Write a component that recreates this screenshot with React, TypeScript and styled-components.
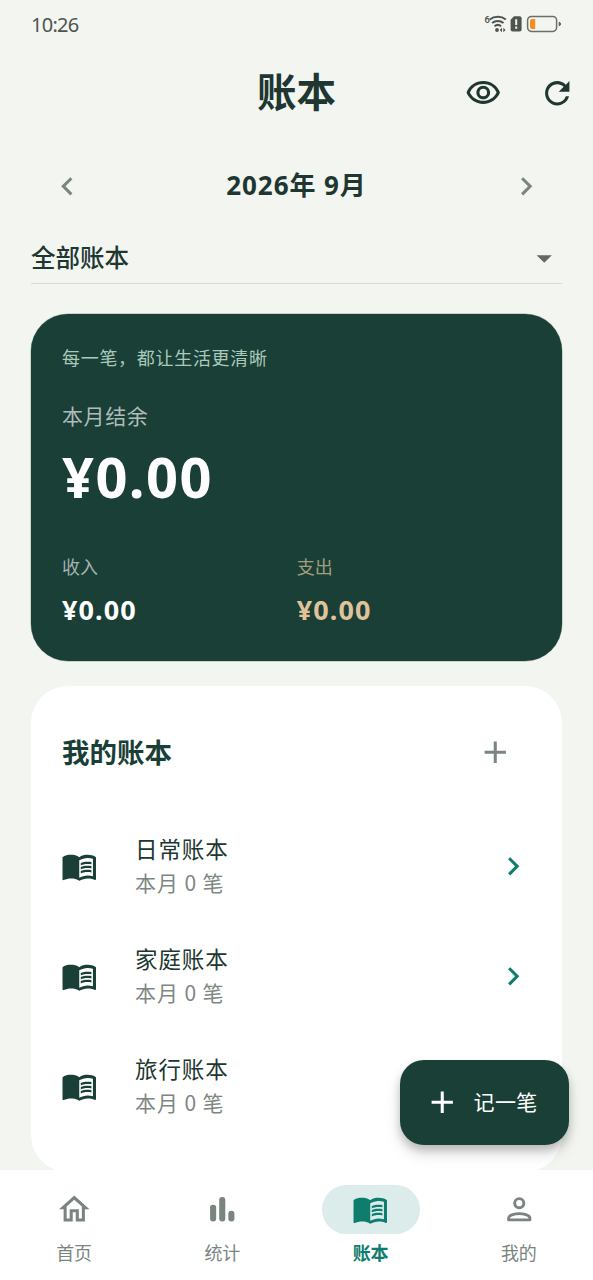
import React from 'react';
import styled, { createGlobalStyle } from 'styled-components';
import {
  MdAdd,
  MdArrowDropDown,
  MdChevronLeft,
  MdChevronRight,
  MdMenuBook,
  MdOutlineHome,
  MdOutlineVisibility,
  MdRefresh,
} from 'react-icons/md';

const GlobalStyle = createGlobalStyle`
  * { box-sizing: border-box; }
  body { margin: 0; background: #f2f5f0; }
`;

const cjk = `'Noto Sans CJK SC', sans-serif`;
const latin = `'Noto Sans', 'Noto Sans CJK SC', sans-serif`;

const Screen = styled.div`
  position: relative;
  display: flex;
  flex-direction: column;
  width: 593px;
  height: 1280px;
  overflow: hidden;
  background: #f2f5f0;
  color: #203630;
  font-family: ${cjk};
  svg { display: block; flex: none; }
`;

const StatusBar = styled.div`
  display: flex;
  align-items: center;
  justify-content: space-between;
  height: 48px;
  padding: 0 31px;
`;

const Clock = styled.span`
  font: 400 20px/24px ${latin};
  letter-spacing: -0.75px;
  color: #50544f;
  padding-top: 1px;
`;

const AppBar = styled.header`
  display: grid;
  grid-template-columns: 1fr auto 1fr;
  align-items: center;
  height: 91px;
  padding: 0 18px;
`;

const Title = styled.h1`
  grid-column: 2;
  margin: 0;
  padding-bottom: 7px;
  font-size: 39.5px;
  font-weight: 700;
  line-height: 48px;
`;

const Actions = styled.div`
  display: flex;
  justify-content: flex-end;
  gap: 37px;
`;

const MonthRow = styled.div`
  display: flex;
  align-items: center;
  justify-content: space-between;
  height: 94px;
  padding: 0 48.5px;
  color: #7a857f;
`;

const Month = styled.span`
  padding-bottom: 2px;
  font: 700 26px/36px ${latin};
  letter-spacing: 0.9px;
  color: #203630;
`;

const BookSelect = styled.div`
  display: flex;
  align-items: center;
  justify-content: space-between;
  height: 51px;
  margin: 0 31px;
  border-bottom: 1px solid #d6dbd6;
  font-size: 24.5px;
  font-weight: 500;
  line-height: 36px;
  color: #203630;
  span { padding-bottom: 3px; }
  svg { color: #626864; }
`;

const Content = styled.main`
  display: flex;
  flex: 1;
  flex-direction: column;
  gap: 25.5px;
  min-height: 0;
  padding: 30px 31px 0 30.5px;
  overflow: hidden;
`;

const BalanceCard = styled.section`
  flex: none;
  height: 346.5px;
  padding: 28px 31.5px 0;
  border-radius: 37px;
  background: #193f37;
  box-shadow: 0 0 0 0.5px #9fb3aa;
`;

const Motto = styled.div`
  font-size: 18px;
  line-height: 30px;
  letter-spacing: 0.7px;
  color: #a9c9bb;
`;

const BalanceLabel = styled.div`
  margin-top: 27px;
  font-size: 21px;
  line-height: 32px;
  letter-spacing: 0.6px;
  color: #afbcb8;
`;

const Balance = styled.div`
  margin-top: 10px;
  font: 700 56px/70px ${latin};
  letter-spacing: 1.4px;
  color: #fff;
`;

const Totals = styled.div`
  display: grid;
  grid-template-columns: 1fr 1fr;
  column-gap: 1px;
  margin-top: 42px;
`;

const TotalLabel = styled.div<{ $color: string }>`
  font-size: 18px;
  line-height: 26px;
  color: ${(p) => p.$color};
`;

const TotalValue = styled.div<{ $color: string }>`
  margin-top: 13px;
  font: 700 27px/36px ${latin};
  letter-spacing: 1.1px;
  color: ${(p) => p.$color};
`;

const BooksCard = styled.section`
  flex: none;
  height: 486px;
  padding: 38px 31.5px 0;
  border-radius: 37px;
  background: #fff;
`;

const BooksHeader = styled.div`
  display: flex;
  align-items: center;
  justify-content: space-between;
  height: 57px;
  padding-right: 17.5px;
  color: #7a857f;
`;

const BooksTitle = styled.h2`
  margin: 0;
  padding-bottom: 3px;
  font-size: 27.5px;
  font-weight: 700;
  line-height: 40px;
  color: #193f37;
`;

const BookList = styled.div`
  margin-top: 30px;
  margin-left: -1px;
  margin-right: -1px;
`;

const BookRow = styled.div`
  display: flex;
  align-items: center;
  height: 110px;
  color: #193f37;
  & > svg:last-child { margin-left: auto; color: #0f7d6d; }
`;

const BookText = styled.div`
  margin-left: 37.5px;
  padding-bottom: 2px;
`;

const BookName = styled.div`
  font-size: 22.5px;
  line-height: 34px;
  letter-spacing: 0.9px;
  color: #203630;
`;

const BookCount = styled.div`
  font-size: 21px;
  line-height: 34px;
  letter-spacing: 0.9px;
  color: #7d8782;
`;

const AddButton = styled.button`
  position: absolute;
  right: 24.5px;
  bottom: 135px;
  display: flex;
  align-items: center;
  gap: 13px;
  width: 168.5px;
  height: 85px;
  padding: 0 0 0 24px;
  border: 0;
  border-radius: 24px;
  background: #193f37;
  box-shadow: 0 5px 8px rgba(0, 0, 0, 0.18), 0 9px 15px rgba(0, 0, 0, 0.13);
  color: #fff;
  font: 400 21px/32px ${cjk};
  letter-spacing: 0.4px;
  span { padding-bottom: 3px; }
`;

const NavBar = styled.nav`
  display: grid;
  grid-template-columns: repeat(4, 1fr);
  flex: none;
  height: 110px;
  padding-top: 14.5px;
  background: #fff;
`;

const NavItem = styled.div<{ $active?: boolean }>`
  display: flex;
  flex-direction: column;
  align-items: center;
  gap: 5px;
  font-size: 18px;
  font-weight: ${(p) => (p.$active ? 700 : 400)};
  line-height: 26px;
  color: ${(p) => (p.$active ? '#0f7d6d' : '#7a857f')};
`;

const Pill = styled.div<{ $active?: boolean }>`
  display: flex;
  align-items: center;
  justify-content: center;
  width: 98px;
  height: 49px;
  border-radius: 25px;
  background: ${(p) => (p.$active ? '#dcecea' : 'transparent')};
`;

const ICON = 36.5;

const StatusIcons = () => (
  <svg width="78" height="20" viewBox="484 14 78 20" fill="none">
    <text x="484.4" y="22.8" fontSize="9.5" fontWeight="600" fontFamily="Roboto" fill="#50544f">6</text>
    <g stroke="#50544f" strokeWidth="2">
      <path d="M489.8 19.5c4.4-3.6 11.6-3.6 16 0" />
      <path d="M492.1 23c3.2-2.7 8.2-2.7 11.4 0" />
      <path d="M494.5 26.3c1.9-1.6 4.7-1.6 6.6 0" />
    </g>
    <circle cx="497" cy="30" r="1.9" fill="#50544f" />
    <path d="M502 27.8v4.4l-2.3-2.2zM503.3 27.8v4.4l2.3-2.2z" fill="#50544f" />
    <path d="M514 16.3h5.6a2 2 0 0 1 2 2v11.2a2 2 0 0 1-2 2h-7a2 2 0 0 1-2-2v-9.8z" fill="#50544f" />
    <path d="M516.2 19.3v5.6M516.2 26.6v2.2" stroke="#f2f5f0" strokeWidth="2" />
    <rect x="527.6" y="16.4" width="29" height="15" rx="3.8" stroke="#6b6f6a" strokeWidth="1.5" />
    <path d="M559.2 22.2c1.8.2 1.8 3.4 0 3.6z" fill="#50544f" stroke="#50544f" strokeWidth=".8" />
    <path d="M532 19h3.2v10H532a2 2 0 0 1-2-2v-6a2 2 0 0 1 2-2z" fill="#f58d20" />
  </svg>
);

const BarsIcon = () => (
  <svg width={ICON} height={ICON} viewBox="0 0 24 24" fill="currentColor">
    <rect x="4" y="9" width="4" height="11" rx="1.9" />
    <rect x="10" y="4" width="4" height="16" rx="1.9" />
    <rect x="16" y="13" width="4" height="7" rx="1.9" />
  </svg>
);

const PersonIcon = () => (
  <svg width={ICON} height={ICON} viewBox="0 0 24 24" fill="none" stroke="currentColor" strokeWidth="1.9" strokeLinejoin="round">
    <circle cx="12" cy="8" r="3" />
    <path d="M5 19v-1.3c0-1.9 4.6-2.8 7-2.8s7 .9 7 2.8V19z" />
  </svg>
);

const books = ['日常账本', '家庭账本', '旅行账本'];

export default function App() {
  return (
    <Screen>
      <GlobalStyle />
      <StatusBar>
        <Clock>10:26</Clock>
        <StatusIcons />
      </StatusBar>
      <AppBar>
        <Title>账本</Title>
        <Actions>
          <MdOutlineVisibility size={ICON} />
          <MdRefresh size={ICON} />
        </Actions>
      </AppBar>
      <MonthRow>
        <MdChevronLeft size={ICON} />
        <Month>2026年 9月</Month>
        <MdChevronRight size={ICON} />
      </MonthRow>
      <BookSelect>
        <span>全部账本</span>
        <MdArrowDropDown size={ICON} />
      </BookSelect>
      <Content>
        <BalanceCard>
          <Motto>每一笔，都让生活更清晰</Motto>
          <BalanceLabel>本月结余</BalanceLabel>
          <Balance>¥0.00</Balance>
          <Totals>
            <div>
              <TotalLabel $color="#a3b2ad">收入</TotalLabel>
              <TotalValue $color="#ffffff">¥0.00</TotalValue>
            </div>
            <div>
              <TotalLabel $color="#a39c7f">支出</TotalLabel>
              <TotalValue $color="#e0c39a">¥0.00</TotalValue>
            </div>
          </Totals>
        </BalanceCard>
        <BooksCard>
          <BooksHeader>
            <BooksTitle>我的账本</BooksTitle>
            <MdAdd size={ICON} />
          </BooksHeader>
          <BookList>
            {books.map((name) => (
              <BookRow key={name}>
                <MdMenuBook size={ICON} />
                <BookText>
                  <BookName>{name}</BookName>
                  <BookCount>本月 0 笔</BookCount>
                </BookText>
                <MdChevronRight size={ICON} />
              </BookRow>
            ))}
          </BookList>
        </BooksCard>
      </Content>
      <NavBar>
        <NavItem>
          <Pill><MdOutlineHome size={ICON} /></Pill>
          首页
        </NavItem>
        <NavItem>
          <Pill><BarsIcon /></Pill>
          统计
        </NavItem>
        <NavItem $active>
          <Pill $active><MdMenuBook size={ICON} /></Pill>
          账本
        </NavItem>
        <NavItem>
          <Pill><PersonIcon /></Pill>
          我的
        </NavItem>
      </NavBar>
      <AddButton>
        <MdAdd size={ICON} />
        <span>记一笔</span>
      </AddButton>
    </Screen>
  );
}
